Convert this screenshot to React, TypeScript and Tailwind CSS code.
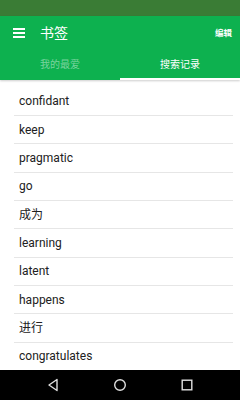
import React from 'react';

const words = [
  'confidant',
  'keep',
  'pragmatic',
  'go',
  '成为',
  'learning',
  'latent',
  'happens',
  '进行',
  'congratulates',
];

function NavBar() {
  return (
    <div className="h-[30px] bg-black flex items-center justify-between px-[46px] text-[#e0e0e0]">
      {/* back */}
      <svg width="14" height="14" viewBox="0 0 14 14" fill="none" stroke="currentColor" strokeWidth="1.4">
        <path d="M11 1.5 L3 7 L11 12.5 Z" strokeLinejoin="round" />
      </svg>
      {/* home */}
      <svg width="14" height="14" viewBox="0 0 14 14" fill="none" stroke="currentColor" strokeWidth="1.4">
        <circle cx="7" cy="7" r="5.3" />
      </svg>
      {/* recents */}
      <svg width="14" height="14" viewBox="0 0 14 14" fill="none" stroke="currentColor" strokeWidth="1.4">
        <rect x="2.2" y="2.2" width="9.6" height="9.6" />
      </svg>
    </div>
  );
}

export default function App() {
  return (
    <div
      className="w-[240px] h-[400px] flex flex-col bg-white overflow-hidden"
      style={{ fontFamily: 'Roboto, "Noto Sans CJK SC", sans-serif' }}
    >
      {/* Status bar */}
      <div className="h-[16px] bg-[#3a7c35]" />

      {/* App bar + tabs */}
      <div className="bg-[#0db14f] shadow-[0_1px_2px_rgba(0,0,0,0.2)] relative z-10">
        <div className="h-[34px] flex items-center pl-[13px] pr-[8px]">
          <div className="flex flex-col gap-[2px] w-[12px]">
            <span className="h-[2px] bg-white" />
            <span className="h-[2px] bg-white" />
            <span className="h-[2px] bg-white" />
          </div>
          <span className="ml-[15px] text-[14px] text-white leading-none">书签</span>
          <span className="ml-auto text-[8.5px] font-bold text-white leading-none">编辑</span>
        </div>
        <div className="h-[30px] flex">
          <div className="flex-1 flex items-center justify-center text-[10px] text-white/45 pb-[2px]">
            我的最爱
          </div>
          <div className="flex-1 flex flex-col">
            <div className="flex-1 flex items-center justify-center text-[10px] text-white">
              搜索记录
            </div>
            <div className="h-[2px] bg-white" />
          </div>
        </div>
      </div>

      {/* List */}
      <div className="flex-1 pt-[7.7px] overflow-hidden">
        {words.map((w, i) => (
          <div
            key={i}
            className="h-[28.33px] ml-[14px] mr-[7px] pl-[5px] flex items-center border-b border-[#e6e6e6] text-[12px] text-[#212121]"
          >
            {w}
          </div>
        ))}
      </div>

      <NavBar />
    </div>
  );
}
